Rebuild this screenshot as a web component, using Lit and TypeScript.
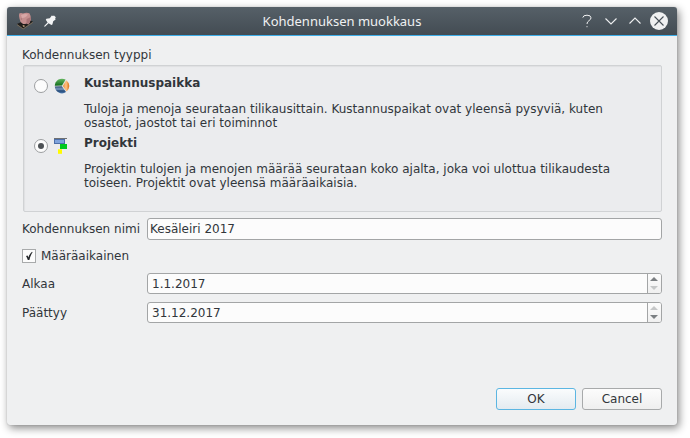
import { LitElement, html, css, svg } from "lit";
import { customElement, property } from "lit/decorators.js";

const pieIcon = html`<svg width="16" height="16" viewBox="0 0 16 16">
  <defs>
    <linearGradient id="g" x1="0" y1="0" x2="0" y2="1"><stop offset="0" stop-color="#67b862" /><stop offset="1" stop-color="#0f6a1a" /></linearGradient>
    <linearGradient id="b" x1="0" y1="0" x2="0" y2="1"><stop offset="0" stop-color="#2f4b72" /><stop offset=".4" stop-color="#7d9cc2" /><stop offset=".65" stop-color="#234877" /><stop offset="1" stop-color="#4d79ae" /></linearGradient>
    <linearGradient id="o" x1="0" y1="0" x2="1" y2="0"><stop offset="0" stop-color="#e98a35" /><stop offset=".5" stop-color="#ffc386" /><stop offset="1" stop-color="#dc6c12" /></linearGradient>
  </defs>
  <circle cx="8" cy="8" r="6.6" fill="#dfe3e2" />
  <path d="M8 7.4 L.8 7.8 A7.2 7.2 0 0 1 11.6 1.6 Z" fill="url(#g)" />
  <path d="M7.8 8.3 L.8 8.5 A7.2 7.2 0 0 0 12 14.1 Z" fill="url(#b)" />
  <path d="M8.9 8 L12.3 2.2 Q15.3 4.6 15.3 8 Q15.2 11.4 12.6 13.4 Z" fill="url(#o)" />
</svg>`;

const projectIcon = html`<svg width="16" height="16" viewBox="0 0 16 16">
  <rect x="0" y="0" width="13" height="1" fill="#6f7173" />
  <rect x="0.5" y="1.5" width="10" height="4" fill="#7fa3dc" stroke="#4c6ea8" />
  <rect x="6" y="6" width="7" height="5" fill="#00c81e" />
  <rect x="4" y="11.3" width="4" height="4.5" fill="#fffb00" />
</svg>`;

@customElement("title-bar")
class TitleBar extends LitElement {
  static styles = css`
    :host {
      display: grid;
      grid-template-columns: 112px 1fr 112px;
      align-items: center;
      height: 28px;
      box-sizing: content-box;
      border-bottom: 1px solid #3daee9;
      border-radius: 3px 3px 0 0;
      background: linear-gradient(#566068, #434c53) padding-box;
      color: #eff0f1;
    }
    .left { display: flex; align-items: center; gap: 9px; padding-left: 9px; }
    .right { display: flex; align-items: center; justify-content: flex-end; gap: 6px; padding-right: 9px; }
    .title {
      font: 13px/18px "Noto Sans", sans-serif;
      text-align: center;
      white-space: nowrap;
    }
    svg { display: block; }
  `;
  render() {
    return html`
      <div class="left">
        <svg width="18" height="18" viewBox="0 0 18 18">
          <path d="M.8 12 L7 16.8 L17 9.8 L12 7 Z" fill="#201e1c" />
          <path d="M1 12.6 L7.2 16.9 L16.8 10.4" fill="none" stroke="#86755a" stroke-width=".8" />
          <path d="M3.2 1.6 L5 1 L7 1.6 Q10 .2 13.4 1.2 Q15.4 4 14.8 8 Q13.8 11 12.4 12.4 L10.4 11.4 Q8 12.8 6.4 11.4 Q4 10.2 3.6 7 Q2.6 4.6 3.2 1.6Z" fill="#c48f8f" />
          <path d="M5 3 Q9 1.4 12 2.4 Q10.4 5.4 6 6Z" fill="#d8a8a7" />
          <path d="M10.6 7 Q13 6 14.8 5 Q14.6 10 12.4 12.2 L10.4 11.2Z" fill="#a87376" />
          <path d="M4.8 7h1.2" stroke="#96656a" stroke-width=".8" />
          <path d="M6.4 13.6 L8.2 13 L8.8 14.6 L7.4 15Z" fill="#c0a27e" />
        </svg>
        <svg width="14" height="14" viewBox="0 0 14 14">
          <path d="M8.8 1.4 L10 2 L11 1.4 L12.8 3.2 L12.2 4.6 L12.6 5.4 L10.2 7.2 L9.4 10.4 L8.4 11 L5.6 9.2 L2.2 12.6 L1.2 12.8 L1.4 11.8 L4.6 8.4 L2.8 5.8 L3.4 4.8 L6.8 4.2Z" fill="#f3f4f5" />
        </svg>
      </div>
      <div class="title">Kohdennuksen muokkaus</div>
      <div class="right">
        <svg width="18" height="18" viewBox="0 0 18 18" fill="none" stroke="#eff0f1" stroke-width="1">
          <path d="M4.8 5.6 Q5 3.2 9 3.2 Q13 3.2 13 5.8 Q13 7.4 11 8.6 Q9 9.8 9 12" />
          <path d="M9 14v1.2" stroke-width="1.2" opacity=".7" />
        </svg>
        <svg width="18" height="18" viewBox="0 0 18 18" fill="none" stroke="#eff0f1" stroke-width="1.1"><path d="M3.5 6.5 L9 12 L14.5 6.5" /></svg>
        <svg width="18" height="18" viewBox="0 0 18 18" fill="none" stroke="#eff0f1" stroke-width="1.1"><path d="M3.5 11.5 L9 6 L14.5 11.5" /></svg>
        <svg width="18" height="18" viewBox="0 0 18 18"><circle cx="9" cy="9" r="9" fill="#eff0f1" /><path d="M4.5 4.5 L13.5 13.5 M13.5 4.5 L4.5 13.5" stroke="#475057" stroke-width="1.1" /></svg>
      </div>
    `;
  }
}

@customElement("type-option")
class TypeOption extends LitElement {
  @property() heading = "";
  @property({ type: Array }) lines: string[] = [];
  @property({ type: Boolean }) checked = false;
  @property({ attribute: false }) icon: unknown;
  static styles = css`
    :host { display: grid; grid-template-columns: 20px 30px 1fr; align-items: start; }
    .radio {
      width: 14px; height: 14px; box-sizing: border-box; margin-top: 3px;
      border: 1px solid #9d9fa1; border-radius: 50%; background: #fcfcfc;
      display: grid; place-items: center;
    }
    .dot { width: 6px; height: 6px; border-radius: 50%; background: #4d5155; }
    .icon { padding-top: 2px; height: 16px; }
    .heading { font-weight: bold; margin-bottom: 12px; }
    .line { white-space: nowrap; letter-spacing: 0.01px; }
    svg { display: block; }
  `;
  render() {
    return html`
      <div class="radio">${this.checked ? html`<div class="dot"></div>` : ""}</div>
      <div class="icon">${this.icon}</div>
      <div>
        <div class="heading">${this.heading}</div>
        ${this.lines.map((l) => html`<div class="line">${l}</div>`)}
      </div>
    `;
  }
}

@customElement("date-spin")
class DateSpin extends LitElement {
  @property() value = "";
  @property() active = "up";
  static styles = css`
    :host {
      display: flex; box-sizing: border-box; height: 21px; width: 515px;
      border: 1px solid #a3a5a6; border-radius: 3px; background: #fcfcfc; overflow: hidden;
    }
    .value { flex: 1; padding-left: 4px; line-height: 20px; }
    .spin { width: 13px; border-left: 1px solid #a3a5a6; background: linear-gradient(#fcfcfc, #f0f0f0); }
    svg { display: block; }
  `;
  render() {
    const on = "#7b7f82";
    const off = "#c5c7c8";
    const up = this.active === "up";
    return html`
      <div class="value">${this.value}</div>
      <div class="spin">
        <svg width="13" height="19" viewBox="0 0 13 19">
          ${svg`<path d="M2 7 L6 3 L10 7Z" fill=${up ? on : off} /><path d="M2 12 L10 12 L6 16Z" fill=${up ? off : on} />`}
        </svg>
      </div>
    `;
  }
}

@customElement("app-root")
class AppRoot extends LitElement {
  static styles = css`
    :host {
      display: block; box-sizing: border-box; width: 690px; height: 438px;
      padding: 7px 13px 13px 7px; background: #fff; overflow: hidden;
      font: 12px/14px "DejaVu Sans", sans-serif; color: #31363b;
    }
    .window {
      display: flex; flex-direction: column; height: 418px;
      background: #eff0f1; border-radius: 3px;
      box-shadow: 0 0 1px rgba(0, 0, 0, 0.3), 2px 3px 8px rgba(0, 0, 0, 0.48);
    }
    .body { flex: 1; display: flex; flex-direction: column; padding: 12px 15px 15px; }
    .group {
      box-sizing: border-box; width: 639px; height: 147px; margin: 3px 0 6px 1px;
      border: 1px solid #d0d2d4; border-radius: 2px; background: #ebecee;
      padding: 10px 10px 0;
      box-shadow: inset 1px 1px 1px rgba(0, 0, 0, 0.05);
    }
    .second { margin-top: 6px; }
    .row { display: flex; align-items: center; justify-content: space-between; }
    .input {
      box-sizing: border-box; width: 515px; height: 22px; line-height: 20px; padding-left: 2px;
      border: 1px solid #a3a5a6; border-radius: 3px; background: #fcfcfc;
    }
    .check { display: flex; align-items: center; gap: 5px; height: 14px; margin: 9px 0 10px; }
    .box { box-sizing: border-box; width: 14px; height: 14px; border: 1px solid #a8aaab; background: #fcfcfc; }
    .box svg { display: block; }
    .later { margin-top: 8px; }
    .buttons { display: flex; justify-content: flex-end; gap: 6px; margin-top: auto; }
    .button {
      box-sizing: border-box; width: 80px; height: 22px; line-height: 20px; text-align: center;
      border: 1px solid #a8aaab; border-radius: 3px; background: linear-gradient(#fcfcfc, #efefef);
    }
    .primary { border-color: #5cb6e2; background: linear-gradient(#fafcfd, #e4ebf0); }
  `;
  render() {
    return html`
      <div class="window">
        <title-bar></title-bar>
        <div class="body">
          <div>Kohdennuksen tyyppi</div>
          <div class="group">
            <type-option
              heading="Kustannuspaikka"
              .icon=${pieIcon}
              .lines=${["Tuloja ja menoja seurataan tilikausittain. Kustannuspaikat ovat yleensä pysyviä, kuten", "osastot, jaostot tai eri toiminnot"]}
            ></type-option>
            <type-option
              class="second"
              checked
              heading="Projekti"
              .icon=${projectIcon}
              .lines=${["Projektin tulojen ja menojen määrää seurataan koko ajalta, joka voi ulottua tilikaudesta", "toiseen. Projektit ovat yleensä määräaikaisia."]}
            ></type-option>
          </div>
          <div class="row"><span>Kohdennuksen nimi</span><div class="input">Kesäleiri 2017</div></div>
          <div class="check">
            <div class="box">
              <svg width="12" height="12" viewBox="0 0 12 12"><path d="M3 6 L4.6 5.4 L5.4 7.4 Q6.4 4 9 1.8 L9.6 2.2 Q7.4 5.4 6.4 10 L4.8 10 Q4 7.6 3 6Z" fill="#232629" /></svg>
            </div>
            <span>Määräaikainen</span>
          </div>
          <div class="row"><span>Alkaa</span><date-spin value="1.1.2017" active="up"></date-spin></div>
          <div class="row later"><span>Päättyy</span><date-spin value="31.12.2017" active="down"></date-spin></div>
          <div class="buttons">
            <div class="button primary">OK</div>
            <div class="button">Cancel</div>
          </div>
        </div>
      </div>
    `;
  }
}
